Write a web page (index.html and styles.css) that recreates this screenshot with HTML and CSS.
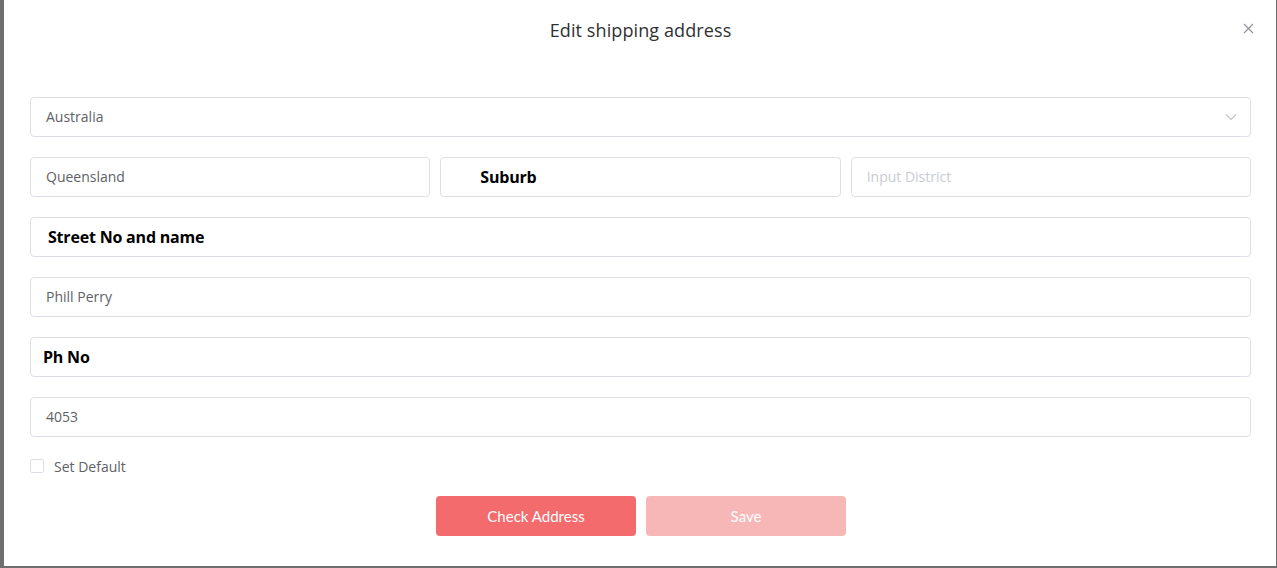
FILE: index.html
```html
<!DOCTYPE html>
<html>
<head>
<meta charset="utf-8">
<link rel="stylesheet" href="styles.css">
</head>
<body>
<div class="frame">
  <div class="modal">
    <div class="header">
      <span class="title">Edit shipping address</span>
      <span class="close">
        <svg width="11" height="11" viewBox="0 0 11 11"><path d="M1 1L10 10M10 1L1 10" stroke="#909399" stroke-width="1.2" fill="none"/></svg>
      </span>
    </div>
    <div class="form">
      <div class="field select">
        <span class="val">Australia</span>
        <svg class="chev" width="12" height="8" viewBox="0 0 12 8"><path d="M1 1.5L6 6.5L11 1.5" stroke="#c0c4cc" stroke-width="1.2" fill="none"/></svg>
      </div>
      <div class="row3">
        <div class="field"><span class="val">Queensland</span></div>
        <div class="field pad-suburb"><span class="bold">Suburb</span></div>
        <div class="field"><span class="ph">Input District</span></div>
      </div>
      <div class="field pad-street"><span class="bold">Street No and name</span></div>
      <div class="field"><span class="val">Phill Perry</span></div>
      <div class="field pad-phone"><span class="bold">Ph No</span></div>
      <div class="field"><span class="val">4053</span></div>
      <label class="check"><span class="box"></span><span class="ctext">Set Default</span></label>
      <div class="actions">
        <button class="btn primary">Check Address</button>
        <button class="btn disabled">Save</button>
      </div>
    </div>
  </div>
</div>
</body>
</html>
```
FILE: styles.css
```css
* { box-sizing: border-box; }
html, body { margin: 0; padding: 0; }
body { width: 1277px; height: 568px; overflow: hidden; font-family: "Open Sans", "Noto Sans", sans-serif; }
.frame {
  width: 1277px; height: 568px;
  background: #6e6e6e;
  padding: 0 1px 2px 4px;
}
.modal {
  background: #fff;
  height: 100%;
  position: relative;
  padding: 0 25px 0 26px;
}
.header {
  height: 62px;
  display: flex;
  align-items: center;
  justify-content: center;
  padding-bottom: 2px;
}
.title { font-size: 18px; color: #303133; letter-spacing: 0.1px; }
.close { position: absolute; right: 22px; top: 23px; line-height: 0; }
.form { padding-top: 35px; display: flex; flex-direction: column; gap: 20px; }
.row3 { display: grid; grid-template-columns: 1fr 1fr 1fr; gap: 10px; }
.field {
  height: 40px;
  border: 1px solid #dcdfe6;
  border-radius: 4px;
  display: flex;
  align-items: center;
  padding: 0 15px 1px;
  font-size: 14px;
}
.val { color: #606266; }
.ph { color: #c8ccd3; }
.select { justify-content: space-between; padding-right: 13px; }
.bold { font-weight: bold; color: #000; font-size: 16px; font-family: "Open Sans", sans-serif; letter-spacing: -0.2px; }
.pad-suburb { padding-left: 39px; }
.pad-street { padding-left: 17px; }
.pad-phone { padding-left: 12px; }
.check { display: flex; align-items: center; gap: 10px; height: 18px; }
.box { width: 14px; height: 14px; border: 1px solid #dcdfe6; border-radius: 2px; }
.ctext { font-size: 14px; color: #606266; }
.actions { display: flex; justify-content: center; gap: 10px; margin-top: 1px; padding-left: 1px; }
.btn {
  width: 200px; height: 40px; border: none; border-radius: 4px;
  font-family: Lato, "Open Sans", sans-serif; font-size: 15px; color: #fff;
  padding-bottom: 2px;
}
.primary { background: #f36b6c; }
.disabled { background: #f8b7b7; }
```
